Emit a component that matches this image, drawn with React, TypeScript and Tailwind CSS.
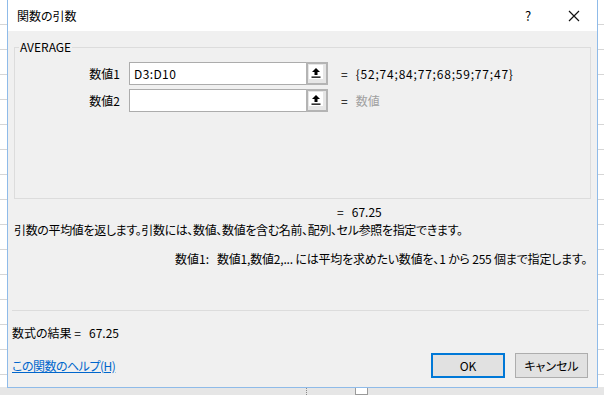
import React from "react";

const F = "font-['Meiryo_UI','Noto_Sans_CJK_JP',sans-serif]";

function RefBtn() {
  return (
    <div className="w-[22px] h-[23px] border-2 border-[#b4b4b4] bg-[#e6e6e6] flex items-start justify-start p-[1px]">
      <div className="w-[14px] h-[14px] bg-white flex items-center justify-center">
        <svg width="10" height="11" viewBox="0 0 10 11">
          <path d="M5 1 L1 5 H3.5 V8 H6.5 V5 H9 Z" fill="#000" />
          <rect x="0.5" y="9.5" width="9" height="1.3" fill="#000" />
        </svg>
      </div>
    </div>
  );
}

function ArgRow({ label, value, result, muted }: { label: string; value: string; result: string; muted?: boolean }) {
  return (
    <div className="flex items-center h-[23px]">
      <div className="w-[107px] text-right pr-[2px] text-[12px] text-black">{label}</div>
      <div className="ml-[7px] w-[177px] h-[23px] border border-[#acacac] border-r-0 bg-white flex items-center pl-[4px] text-[12px] text-black tracking-[0.4px]">
        {value}
      </div>
      <RefBtn />
      <div className="ml-[13px] text-[12px] text-black">=</div>
      <div className={`ml-[8px] text-[12px] ${muted ? "text-[#a0a0a0]" : "text-black tracking-[0.8px]"}`}>{result}</div>
    </div>
  );
}

export default function App() {
  return (
    <div
      className={`w-[604px] h-[395px] overflow-hidden relative bg-white ${F} [font-feature-settings:'palt']`}
      style={{
        backgroundImage:
          "repeating-linear-gradient(to bottom, transparent 0, transparent 24px, #d6d6d6 24px, #d6d6d6 25px)",
      }}
    >
      <div className="absolute left-0 right-0 bottom-0 h-[8px] bg-[#e6e6e6]">
        <div className="absolute left-[306px] top-0 h-[8px] w-[2px] border-l border-dotted border-[#888]" />
        <div className="absolute left-[355px] top-0 h-[8px] w-[13px] border border-[#9a9a9a] bg-white" />
      </div>
      <div className="absolute left-[7px] top-0 w-[591px] h-[388px] border border-t-0 border-[#8fbbe9] bg-[#f0f0f0] flex flex-col">
        {/* title bar */}
        <div className="h-[31px] bg-white flex items-center shrink-0">
          <div className="ml-[9px] text-[12px] text-black">関数の引数</div>
          <div className="flex-1" />
          <div className="w-[20px] text-center text-[13px] text-black mr-[30px]">?</div>
          <svg className="mr-[17px]" width="12" height="12" viewBox="0 0 12 12">
            <path d="M1 1 L11 11 M11 1 L1 11" stroke="#111" strokeWidth="1.2" />
          </svg>
        </div>
        {/* body */}
        <div className="flex-1 flex flex-col px-[5px]">
          <div className="relative mt-[16px] mx-[1px] h-[152px] border border-[#dcdcdc]">
            <div className="absolute left-[4px] -top-[9px] bg-[#f0f0f0] px-[1px] text-[12px] leading-[16px] text-black">
              AVERAGE
            </div>
            <div className="pt-[14px] flex flex-col gap-[4px]">
              <ArgRow label="数値1" value="D3:D10" result="{52;74;84;77;68;59;77;47}" />
              <ArgRow label="数値2" value="" result="数値" muted />
            </div>
          </div>
          <div className="mt-[5px] pl-[324px] text-[12px] leading-[16px] text-black">
            =&nbsp;&nbsp;&nbsp;67.25
          </div>
          <div className="mt-[2px] pl-[1px] text-[12px] leading-[16px] text-black tracking-[-0.35px]">
            引数の平均値を返します。引数には、数値、数値を含む名前、配列、セル参照を指定できます。
          </div>
          <div className="mt-[13px] pl-[162px] flex text-[12px] leading-[16px] text-black">
            <span className="w-[42px]">数値1:</span>
            <span className="tracking-[-0.2px]">数値1,数値2,... には平均を求めたい数値を、1 から 255 個まで指定します。</span>
          </div>
          <div className="mt-[43px] -ml-[1px] mr-[3px] h-px bg-[#dcdcdc]" />
          <div className="mt-[14px] -ml-[1px] text-[12px] leading-[16px] text-black">
            数式の結果 =&nbsp;&nbsp;&nbsp;67.25
          </div>
          <div className="mt-[12px] flex items-end">
            <a className="-ml-[1px] mb-[4px] text-[12px] leading-[16px] text-[#0066cc] underline tracking-[-0.5px]">
              この関数のヘルプ(H)
            </a>
            <div className="flex-1" />
            <div className="w-[74px] h-[25px] border-2 border-[#0078d7] bg-[#e1e1e1] flex items-center justify-center text-[12px] text-black">
              OK
            </div>
            <div className="ml-[10px] mr-[4px] w-[73px] h-[25px] border border-[#adadad] bg-[#e1e1e1] flex items-center justify-center text-[12px] text-black">
              キャンセル
            </div>
          </div>
        </div>
      </div>
    </div>
  );
}
